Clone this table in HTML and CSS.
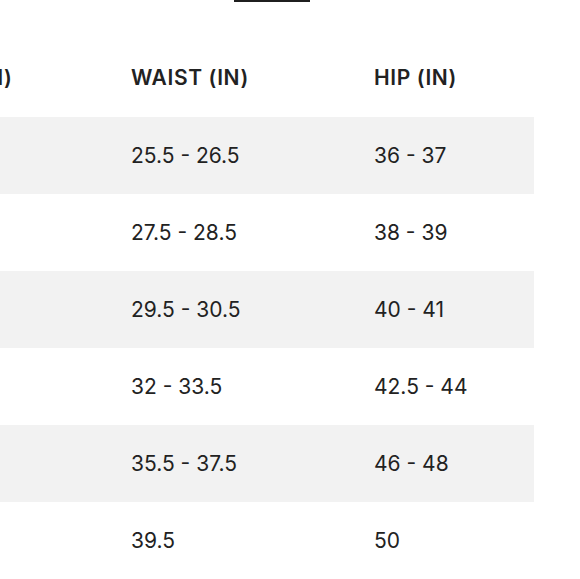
FILE: index.html
```html
<!DOCTYPE html>
<html lang="en">
<head>
<meta charset="utf-8">
<title>Size chart</title>
<link rel="stylesheet" href="styles.css">
</head>
<body>
<div class="tabs"><div class="tab-active"></div></div>
<div class="chart">
  <div class="row head">
    <div class="cell">BUST (IN)</div>
    <div class="cell">WAIST (IN)</div>
    <div class="cell">HIP (IN)</div>
  </div>
  <div class="row shaded">
    <div class="cell">31 - 32</div>
    <div class="cell">25.5 - 26.5</div>
    <div class="cell">36 - 37</div>
  </div>
  <div class="row">
    <div class="cell">33 - 34</div>
    <div class="cell">27.5 - 28.5</div>
    <div class="cell">38 - 39</div>
  </div>
  <div class="row shaded">
    <div class="cell">35 - 36</div>
    <div class="cell">29.5 - 30.5</div>
    <div class="cell">40 - 41</div>
  </div>
  <div class="row">
    <div class="cell">38 - 39</div>
    <div class="cell">32 - 33.5</div>
    <div class="cell">42.5 - 44</div>
  </div>
  <div class="row shaded">
    <div class="cell">41 - 43</div>
    <div class="cell">35.5 - 37.5</div>
    <div class="cell">46 - 48</div>
  </div>
  <div class="row">
    <div class="cell">45</div>
    <div class="cell">39.5</div>
    <div class="cell">50</div>
  </div>
</div>
</body>
</html>
```
FILE: styles.css
```css
html, body {
  margin: 0;
  padding: 0;
  background: #fff;
  overflow: hidden;
}
body {
  font-family: Inter, "Liberation Sans", sans-serif;
  color: #222;
  width: 580px;
  height: 579px;
}
.tabs {
  height: 2px;
  display: flex;
}
.tab-active {
  margin-left: 234px;
  width: 76px;
  height: 2px;
  background: #1f1f1f;
}
.chart {
  margin-left: -93px;
  width: 627px;
}
.row {
  display: grid;
  grid-template-columns: 224px 243px 160px;
  height: 77px;
  align-items: center;
  font-size: 21px;
  line-height: 24px;
  font-weight: 400;
}
.row.head {
  height: 115px;
  align-items: end;
  padding-bottom: 27px;
  box-sizing: border-box;
  font-weight: 600;
  letter-spacing: 0.6px;
}
.row.shaded {
  background: #f2f2f2;
}
.cell {
  white-space: nowrap;
}
```
